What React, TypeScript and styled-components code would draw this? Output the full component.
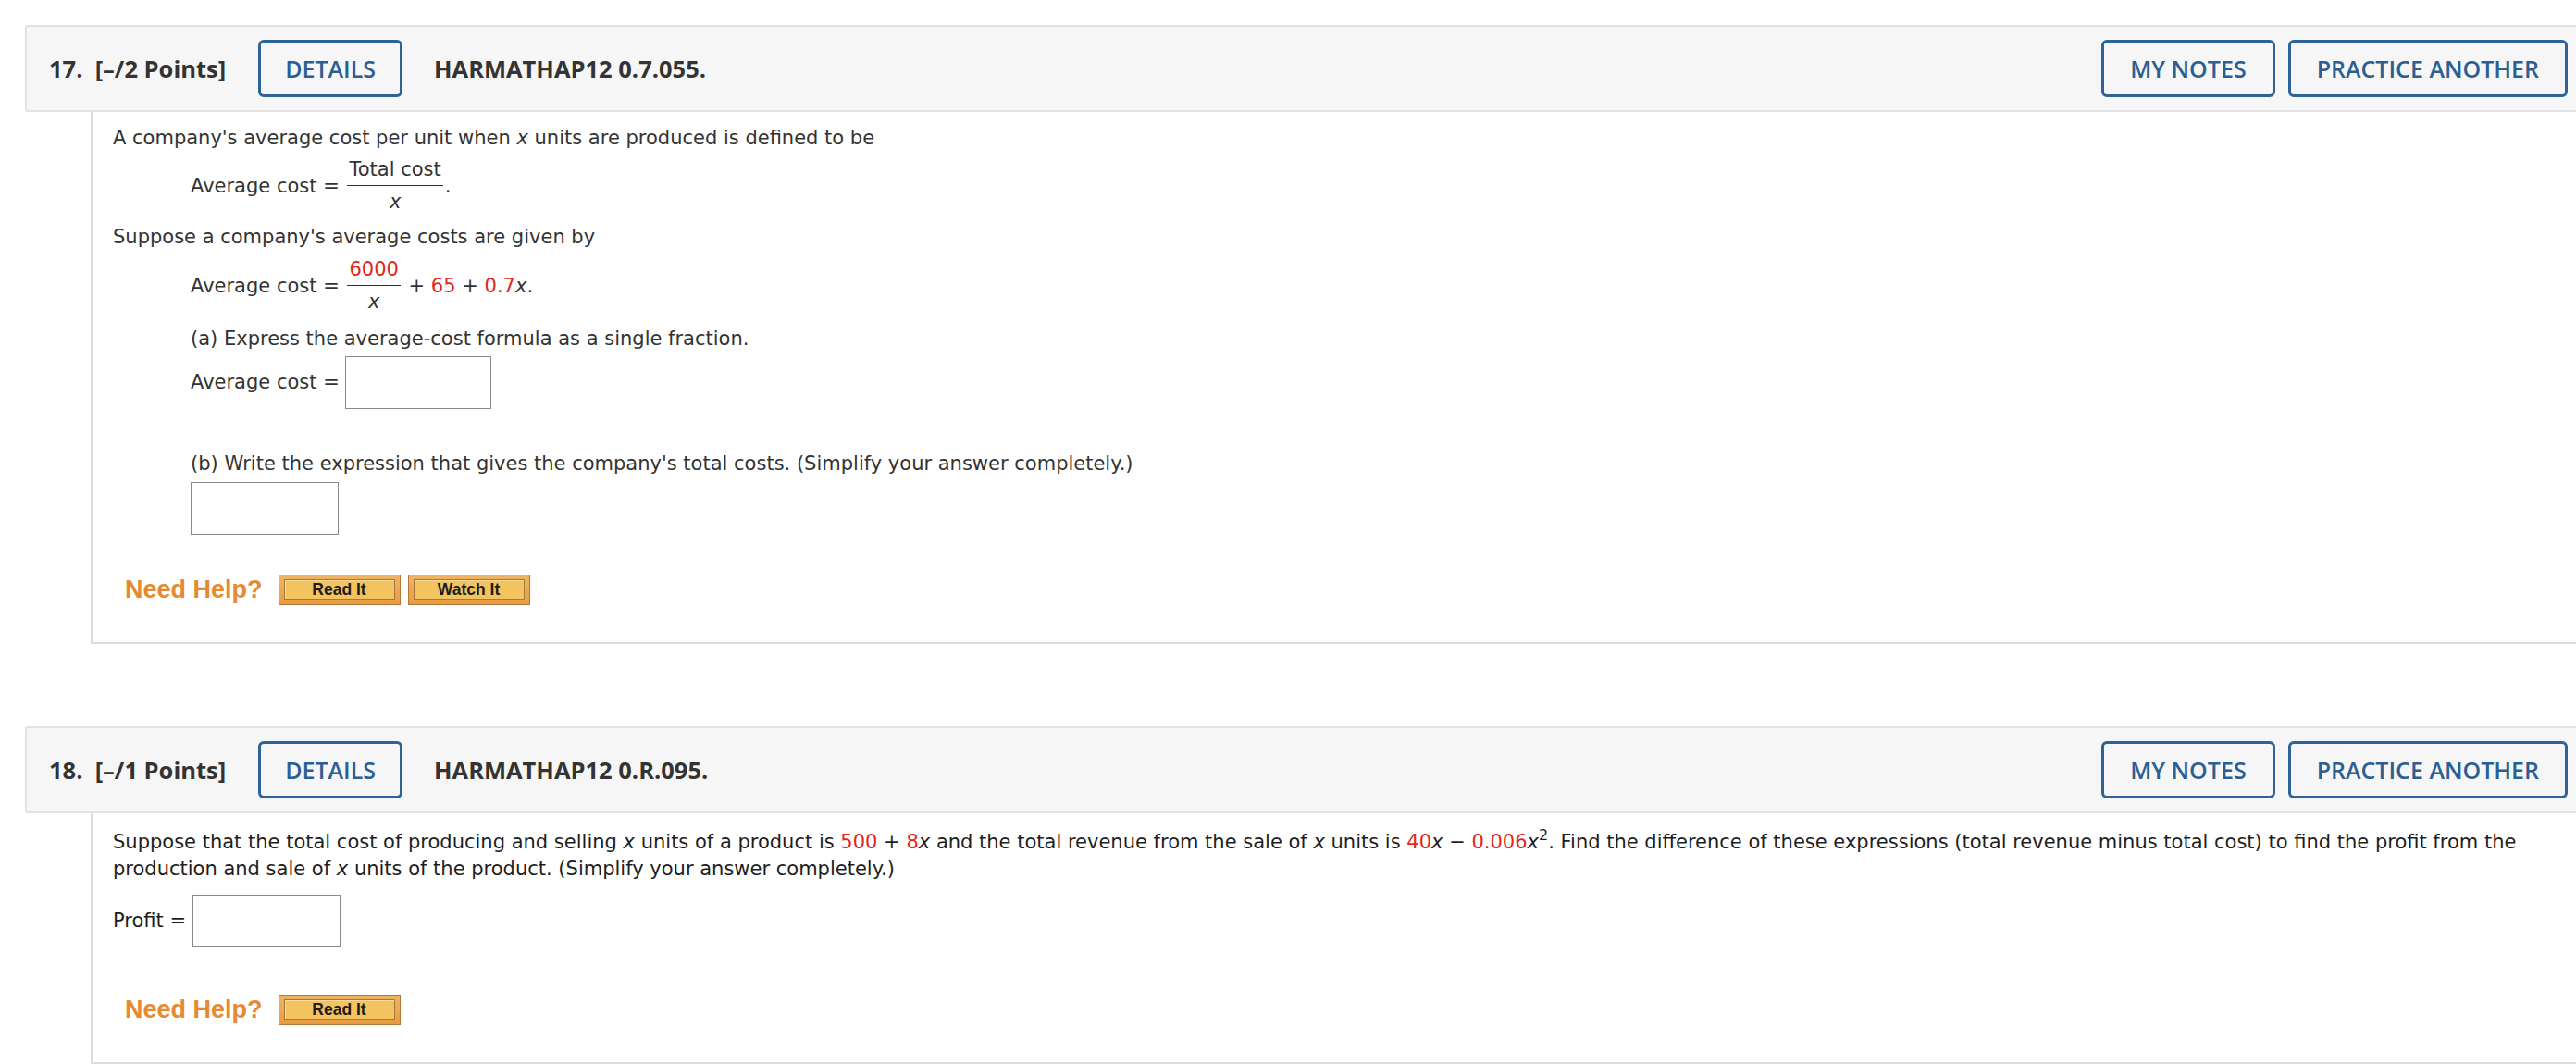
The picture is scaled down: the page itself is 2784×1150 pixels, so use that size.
import React from "react";
import styled, { createGlobalStyle } from "styled-components";

const GlobalStyle = createGlobalStyle`
  html, body { margin: 0; padding: 0; background: #ffffff; }
  body { font-family: "DejaVu Sans", Verdana, sans-serif; color: #333; }
`;

const Page = styled.div`
  padding: 27px 0 0 27px;
  overflow: hidden;
  width: 2757px;
  height: 1123px;
`;

const Question = styled.section<{ $gap?: number }>`
  margin-bottom: ${(p) => p.$gap ?? 0}px;
`;

const Header = styled.div`
  display: flex;
  align-items: center;
  height: 90px;
  background: #f6f6f6;
  border: 2px solid #e2e2e2;
  border-right: none;
  border-radius: 3px 0 0 3px;
  padding: 0 9px 0 24px;
  font-family: "Open Sans", "Liberation Sans", sans-serif;
`;

const QNum = styled.span`
  font-size: 25.5px;
  font-weight: 700;
  color: #333;
  white-space: pre;
`;

const OutlineButton = styled.button<{ $pad?: number }>`
  font-family: "Open Sans", "Liberation Sans", sans-serif;
  font-size: 25px;
  font-weight: 600;
  color: #2b5f93;
  background: transparent;
  border: 3px solid #2d6396;
  border-radius: 6px;
  height: 62px;
  padding: 0 ${(p) => p.$pad ?? 26}px;
  cursor: pointer;
`;

const Title = styled.span`
  font-size: 25.5px;
  font-weight: 700;
  color: #333;
  margin-left: 34px;
`;

const DetailsWrap = styled.div`
  margin-left: 35px;
  display: flex;
`;

const Spacer = styled.div`
  flex: 1;
`;

const RightButtons = styled.div`
  display: flex;
  gap: 14px;
`;

const Body = styled.div<{ $pt: number; $pb: number; $ink: string }>`
  margin-left: 71px;
  border-left: 2px solid #dcdcdc;
  border-bottom: 2px solid #dcdcdc;
  padding: ${(p) => p.$pt}px 0 ${(p) => p.$pb}px 22px;
  font-size: 21px;
  line-height: 29px;
  color: ${(p) => p.$ink};
`;

const P = styled.div<{ $mt?: number; $indent?: boolean }>`
  margin-top: ${(p) => p.$mt ?? 0}px;
  margin-left: ${(p) => (p.$indent ? 84 : 0)}px;
  max-width: 2620px;
`;

const Eq = styled.div<{ $mt?: number }>`
  margin-top: ${(p) => p.$mt ?? 0}px;
  margin-left: 84px;
  display: flex;
  align-items: center;
  white-space: pre;
`;

const Frac = styled.span`
  display: inline-flex;
  flex-direction: column;
  align-items: center;
  margin: 0 2px 0 2px;
`;

const Num = styled.span`
  padding: 0 2px 3px;
  border-bottom: 1.5px solid #333;
  line-height: 27px;
`;

const Den = styled.span`
  padding-top: 4px;
  line-height: 27px;
  font-style: italic;
`;

const Red = styled.span`
  color: #e3261c;
`;

const I = styled.i`
  font-style: italic;
`;

const Sup = styled.sup`
  font-size: 16px;
  line-height: 0;
  vertical-align: 9px;
`;

const AnswerBox = styled.input<{ $w?: number }>`
  box-sizing: border-box;
  width: ${(p) => p.$w ?? 158}px;
  height: 57px;
  border: 1.5px solid #8a8a8a;
  background: #fff;
  margin: 0;
  padding: 0;
  vertical-align: middle;
`;

const HelpRow = styled.div<{ $mt: number }>`
  display: flex;
  align-items: center;
  margin-top: ${(p) => p.$mt}px;
  margin-left: 13px;
`;

const NeedHelp = styled.span`
  font-family: "Liberation Sans", Arial, sans-serif;
  font-weight: 700;
  font-size: 27px;
  color: #e48a32;
  margin-right: 17px;
`;

const HelpButton = styled.button`
  box-sizing: border-box;
  width: 132px;
  height: 33px;
  margin-right: 8px;
  padding: 4px 5px 5px 5px;
  background: linear-gradient(#f0b463, #e89c40);
  border: 1px solid #b3773a;
  display: flex;
  cursor: pointer;
`;

const HelpInner = styled.span`
  flex: 1;
  display: flex;
  align-items: center;
  justify-content: center;
  background: #f3c35f;
  border: 1px solid #a27a44;
  box-shadow: inset 1px 1px 0 #f8dc9c;
  font-family: "Liberation Sans", Arial, sans-serif;
  font-weight: 700;
  font-size: 17.5px;
  color: #1c1c1c;
`;

const EqRow = styled.div<{ $mt?: number; $indent?: boolean }>`
  display: flex;
  align-items: center;
  white-space: pre;
  margin-top: ${(p) => p.$mt ?? 0}px;
  margin-left: ${(p) => (p.$indent ? 84 : 0)}px;
`;

function QHeader({ num, pts, title }: { num: string; pts: string; title: string }) {
  return (
    <Header>
      <QNum>{`${num}.  [–/${pts} Points]`}</QNum>
      <DetailsWrap>
        <OutlineButton>DETAILS</OutlineButton>
      </DetailsWrap>
      <Title>{title}</Title>
      <Spacer />
      <RightButtons>
        <OutlineButton $pad={28}>MY NOTES</OutlineButton>
        <OutlineButton $pad={28}>PRACTICE ANOTHER</OutlineButton>
      </RightButtons>
    </Header>
  );
}

function Help({ watch, mt }: { watch?: boolean; mt: number }) {
  return (
    <HelpRow $mt={mt}>
      <NeedHelp>Need Help?</NeedHelp>
      <HelpButton>
        <HelpInner>Read It</HelpInner>
      </HelpButton>
      {watch && (
        <HelpButton>
          <HelpInner>Watch It</HelpInner>
        </HelpButton>
      )}
    </HelpRow>
  );
}

export default function App() {
  return (
    <>
      <GlobalStyle />
      <Page>
        <Question $gap={89}>
          <QHeader num="17" pts="2" title="HARMATHAP12 0.7.055." />
          <Body $pt={14} $pb={40} $ink="#333">
            <P>
              A company's average cost per unit when <I>x</I> units are produced is defined to be
            </P>
            <Eq $mt={6}>
              Average cost ={" "}
              <Frac>
                <Num>Total cost</Num>
                <Den>x</Den>
              </Frac>
              .
            </Eq>
            <P $mt={10}>Suppose a company's average costs are given by</P>
            <Eq $mt={7}>
              Average cost ={" "}
              <Frac>
                <Num>
                  <Red>6000</Red>
                </Num>
                <Den>x</Den>
              </Frac>
              {" + "}
              <Red>65</Red>
              {" + "}
              <Red>0.7</Red>
              <I>x</I>.
            </Eq>
            <P $mt={12} $indent>
              (a) Express the average-cost formula as a single fraction.
            </P>
            <EqRow $mt={4} $indent>
              Average cost = <AnswerBox />
            </EqRow>
            <P $mt={45} $indent>
              (b) Write the expression that gives the company's total costs. (Simplify your answer completely.)
            </P>
            <EqRow $mt={5} $indent>
              <AnswerBox $w={160} />
            </EqRow>
            <Help watch mt={43} />
          </Body>
        </Question>
        <Question>
          <QHeader num="18" pts="1" title="HARMATHAP12 0.R.095." />
          <Body $pt={17} $pb={40} $ink="#1e1e1e">
            <P $mt={0}>
              Suppose that the total cost of producing and selling <I>x</I> units of a product is <Red>500</Red> +{" "}
              <Red>8</Red>
              <I>x</I> and the total revenue from the sale of <I>x</I> units is <Red>40</Red>
              <I>x</I> − <Red>0.006</Red>
              <I>x</I>
              <Sup>2</Sup>. Find the difference of these expressions (total revenue minus total cost) to find the
              profit from the production and sale of <I>x</I> units of the product. (Simplify your answer completely.)
            </P>
            <EqRow $mt={13}>
              Profit = <AnswerBox $w={160} />
            </EqRow>
            <Help mt={51} />
          </Body>
        </Question>
      </Page>
    </>
  );
}
